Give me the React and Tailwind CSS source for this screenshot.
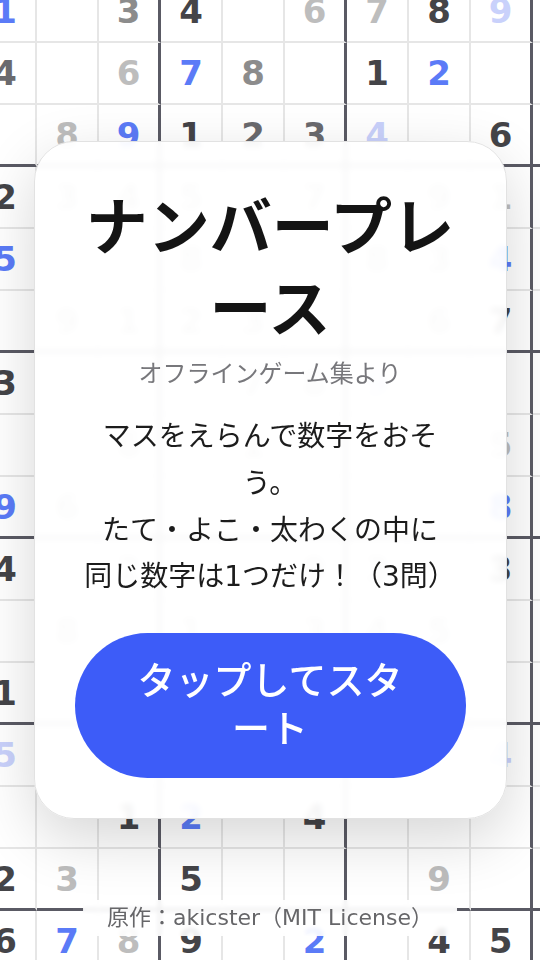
import React from 'react';

// 背景の盤面（1マス=62px）。"数字+色" の形で並べる
const ROWS = [
    ['1b', '', '3g', '4d', '', '6l', '7l', '8d', '9q'],
    ['4m', '', '6l', '7b', '8g', '', '1d', '2b', ''],
    ['', '8l', '9b', '1d', '2m', '3m', '4q', '', '6d'],
    ['2d', '3l', '4l', '5l', '', '7l', '', '9l', '1l'],
    ['5b', '', '', '8l', '', '', '8l', '3l', '4b'],
    ['', '9l', '1l', '2l', '3l', '', '', '6l', '7d'],
    ['3d', '', '', '', '7l', '8l', '9q', '', ''],
    ['', '', '6l', '', '1l', '', '', '', '5l'],
    ['9b', '6l', '', '', '', '', '', '', '8b'],
    ['4d', '', '2l', '', '', '9l', '3l', '', '3d'],
    ['', '8l', '', '1l', '', '3l', '4l', '5l', ''],
    ['1d', '', '', '', '', '', '', '', ''],
    ['5q', '', '', '', '', '', '', '', '4q'],
    ['', '', '1d', '2b', '', '4d', '', '', ''],
    ['2d', '3l', '', '5d', '', '', '', '9l', ''],
    ['6d', '7b', '8l', '9d', '', '2b', '', '4d', '5d'],
];

const COLORS = {
    d: 'text-[#444448]',
    m: 'text-[#6a6a6e]',
    g: 'text-[#8c8c8c]',
    l: 'text-[#bdbdbd]',
    b: 'text-[#5b7bf7]',
    q: 'text-[#c9d1fb]',
};

const Board = () => (
    <div className="absolute -left-[25px] -top-[19px] grid grid-cols-[repeat(10,62px)] auto-rows-[62px]">
        {ROWS.map((row, r) =>
            [...row, ''].map((cell, c) => (
                <div
                    key={`${r}-${c}`}
                    className={`flex items-center justify-center text-[34px] font-bold leading-none ${
                        c % 3 === 2 ? 'border-r-[3px] border-r-[#5a5a64]' : 'border-r-2 border-r-[#e6e6e6]'
                    } ${r % 3 === 2 ? 'border-b-[3px] border-b-[#5a5a64]' : 'border-b-2 border-b-[#e6e6e6]'} ${
                        cell ? COLORS[cell[1]] : ''
                    }`}
                >
                    {cell ? cell[0] : ''}
                </div>
            ))
        )}
    </div>
);

const App = () => {
    return (
        <div className="relative h-[960px] w-[540px] overflow-hidden bg-white font-['DejaVu_Sans','Noto_Sans_CJK_JP',sans-serif]">
            <Board />

            {/* スタートカード */}
            <div className="relative flex h-full items-center justify-center">
                <div className="w-[473px] rounded-[40px] border border-[#e2e2e2] bg-white/[0.94] px-10 pt-10 pb-10 text-center shadow-[0_20px_60px_rgba(0,0,0,0.16)] backdrop-blur-[3px]">
                    <h1 className="mt-[6px] text-[62px] font-bold leading-[82px] text-[#141414]">ナンバープレース</h1>
                    <p className="mt-[6px] text-2xl leading-8 text-[#77777b]">オフラインゲーム集より</p>
                    <p className="mx-auto mt-6 max-w-[375px] text-[28px] leading-[1.67] text-[#1c1c1c]">
                        マスをえらんで数字をおそう。
                        <br />
                        たて・よこ・太わくの中に
                        <br />
                        同じ数字は1つだけ！（3問）
                    </p>
                    <button className="mt-8 w-full rounded-full bg-[#3d5cf8] px-12 py-[25px] text-[38px] font-medium leading-[1.25] text-white">
                        タップしてスタート
                    </button>
                </div>
            </div>

            <div className="absolute bottom-6 left-1/2 -translate-x-1/2 whitespace-nowrap rounded-md bg-white/90 px-6 text-[22px] leading-9 text-[#666669] backdrop-blur-[2px]">
                原作：akicster（MIT License）
            </div>
        </div>
    );
};

export default App;
